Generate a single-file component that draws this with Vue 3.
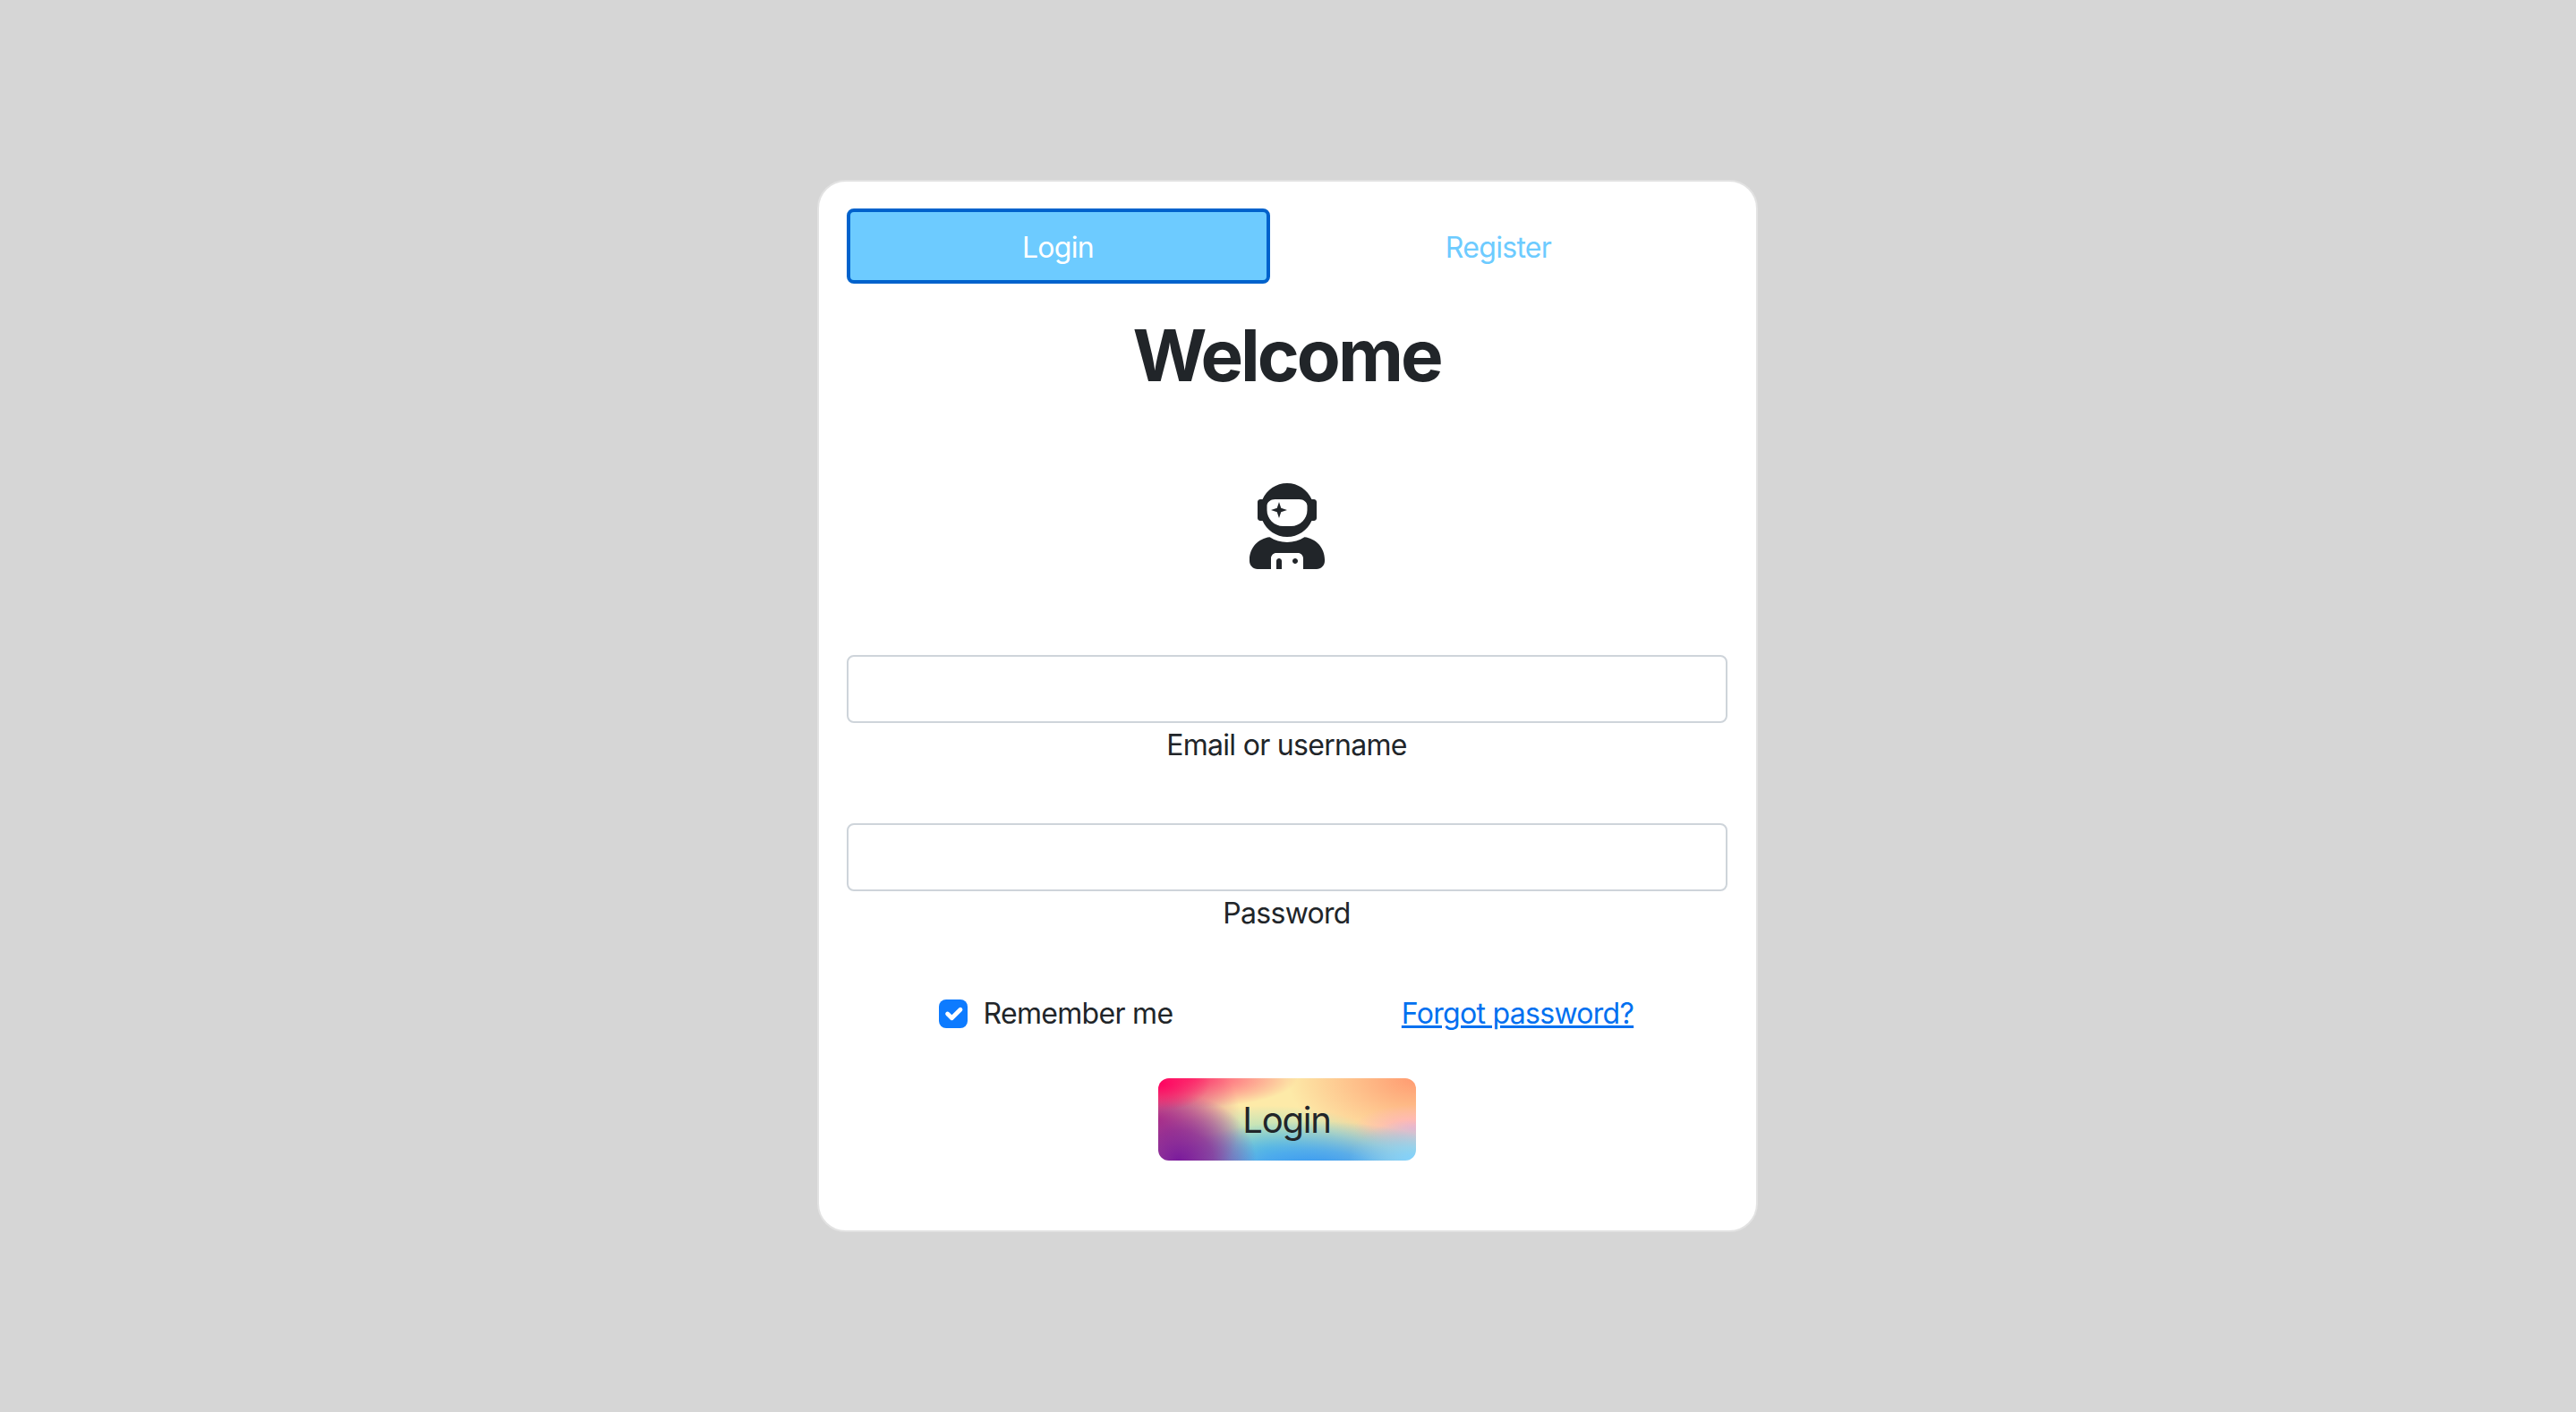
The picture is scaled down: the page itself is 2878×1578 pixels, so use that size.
<script setup>
import { ref } from 'vue';

const activeTab = ref('login');
const email = ref('');
const password = ref('');
const remember = ref(true);
</script>

<template>
  <div class="page">
    <div class="card">
      <div class="tabs">
        <button class="tab tab-login" :class="{ active: activeTab === 'login' }" @click="activeTab = 'login'">Login</button>
        <button class="tab tab-register" :class="{ active: activeTab === 'register' }" @click="activeTab = 'register'">Register</button>
      </div>

      <h1 class="title">Welcome</h1>

      <svg class="avatar" viewBox="0 0 448 512" aria-hidden="true">
        <path fill="currentColor" d="M64 224h13.5c24.7 56.5 80.9 96 146.5 96s121.8-39.5 146.5-96H384c8.8 0 16-7.2 16-16v-96c0-8.8-7.2-16-16-16h-13.5C345.8 39.5 289.6 0 224 0S102.2 39.5 77.5 96H64c-8.8 0-16 7.2-16 16v96c0 8.8 7.2 16 16 16zm40-88c0-22.1 21.5-40 48-40h144c26.5 0 48 17.9 48 40v24c0 53-43 96-96 96h-48c-53 0-96-43-96-96v-24zm72 72l12-36 36-12-36-12-12-36-12 36-36 12 36 12 12 36zm151.6 113.4C297.7 340.7 262.2 352 224 352s-73.7-11.3-103.6-30.6C52.9 328.5 0 385 0 454.4v9.6c0 26.5 21.5 48 48 48h80v-64c0-17.7 14.3-32 32-32h128c17.7 0 32 14.3 32 32v64h80c26.5 0 48-21.5 48-48v-9.6c0-69.4-52.9-125.9-120.4-133zM272 448c-8.8 0-16 7.2-16 16s7.2 16 16 16 16-7.2 16-16-7.2-16-16-16zm-96 0c-8.8 0-16 7.2-16 16v48h32v-48c0-8.8-7.2-16-16-16z" />
      </svg>

      <form class="form" @submit.prevent>
        <div class="field">
          <input id="email" v-model="email" type="text" />
          <label for="email">Email or username</label>
        </div>
        <div class="field">
          <input id="password" v-model="password" type="password" />
          <label for="password">Password</label>
        </div>

        <div class="options">
          <label class="remember">
            <span class="check" @click.prevent="remember = !remember">
              <svg v-if="remember" viewBox="0 0 20 20"><path d="m6 10 3 3 6-6" fill="none" stroke="#fff" stroke-width="3" stroke-linecap="round" stroke-linejoin="round" /></svg>
            </span>
            Remember me
          </label>
          <a class="forgot" href="#">Forgot password?</a>
        </div>

        <button class="submit" type="submit">Login</button>
      </form>
    </div>
  </div>
</template>

<style>
html, body {
  margin: 0;
  background: #d6d6d6;
}
</style>

<style scoped>
.page {
  align-items: center;
  background: #d6d6d6;
  box-sizing: border-box;
  display: flex;
  font-family: Inter, "Liberation Sans", sans-serif;
  justify-content: center;
  letter-spacing: -0.7px;
  min-height: 100vh;
  padding-right: 2px;
}

.card {
  background: #ffffff;
  border: 2px solid #e2e2e2;
  border-radius: 32px;
  box-sizing: border-box;
  color: #212529;
  display: flex;
  flex-direction: column;
  padding: 30px 32px 78px 31px;
  width: 1051px;
}

.tabs {
  display: flex;
}

.tab {
  background: transparent;
  border: 4px solid transparent;
  border-radius: 8px;
  box-sizing: border-box;
  color: #6dcbff;
  cursor: pointer;
  font-family: inherit;
  font-size: 32px;
  height: 84px;
  letter-spacing: -0.7px;
  padding: 2px 0 0;
}

.tab-login {
  width: 473px;
}

.tab-register {
  flex: 1;
}

.tab.active {
  background: #6dcbff;
  border-color: #0062cc;
  color: #ffffff;
}

.title {
  font-size: 80px;
  font-weight: 700;
  letter-spacing: -3px;
  line-height: 96px;
  margin: 32px 0 0;
  text-align: center;
}

.avatar {
  align-self: center;
  color: #212529;
  height: 96px;
  margin-top: 95px;
  width: 84px;
}

.form {
  display: flex;
  flex-direction: column;
  margin-top: 96px;
}

.field {
  display: flex;
  flex-direction: column;
  margin-bottom: 62px;
}

.field input {
  border: 2px solid #ced4da;
  border-radius: 8px;
  box-sizing: border-box;
  font-size: 32px;
  height: 76px;
  outline: none;
  padding: 12px 24px;
  width: 100%;
}

.field label {
  font-size: 32px;
  line-height: 50px;
  text-align: center;
}

.options {
  align-items: center;
  column-gap: 48px;
  display: grid;
  font-size: 32px;
  grid-template-columns: 1fr 1fr;
  justify-items: center;
  margin-top: 5px;
}

.remember {
  align-items: center;
  cursor: pointer;
  display: flex;
  gap: 18px;
}

.check {
  background: #0d7bff;
  border-radius: 8px;
  display: block;
  height: 32px;
  width: 32px;
}

.check svg {
  display: block;
  height: 32px;
  width: 32px;
}

.forgot {
  color: #0070f0;
}

.submit {
  align-self: center;
  background:
    radial-gradient(ellipse 20% 34% at 0% 6%, #ff0060 0%, rgba(255, 0, 96, 0) 100%),
    radial-gradient(ellipse 42% 36% at 12% 0%, rgba(255, 40, 105, 0.9) 0%, rgba(255, 60, 110, 0) 100%),
    radial-gradient(ellipse 30% 80% at 8% 100%, #7a1a9c 0%, rgba(128, 28, 150, 0.7) 45%, rgba(150, 40, 130, 0) 100%),
    radial-gradient(ellipse 32% 95% at 0% 50%, rgba(190, 40, 125, 0.9) 0%, rgba(190, 40, 125, 0) 100%),
    radial-gradient(ellipse 26% 50% at 100% 100%, #7fd2ff 0%, rgba(127, 210, 255, 0) 100%),
    radial-gradient(ellipse 60% 60% at 60% 112%, #2f92f5 0%, rgba(61, 159, 245, 0.8) 40%, rgba(61, 159, 245, 0) 100%),
    radial-gradient(ellipse 24% 28% at 100% 60%, #ffb0c4 0%, rgba(255, 176, 196, 0) 100%),
    radial-gradient(ellipse 48% 55% at 42% 88%, rgba(120, 220, 205, 0.95) 0%, rgba(120, 220, 205, 0) 100%),
    radial-gradient(ellipse 50% 85% at 100% 0%, #ff9a70 0%, rgba(255, 154, 112, 0) 100%),
    #fdeaa8;
  border: 0;
  border-radius: 12px;
  color: #212529;
  cursor: pointer;
  font-family: inherit;
  font-size: 40px;
  height: 92px;
  letter-spacing: -1.2px;
  margin-top: 53px;
  width: 288px;
}
</style>
